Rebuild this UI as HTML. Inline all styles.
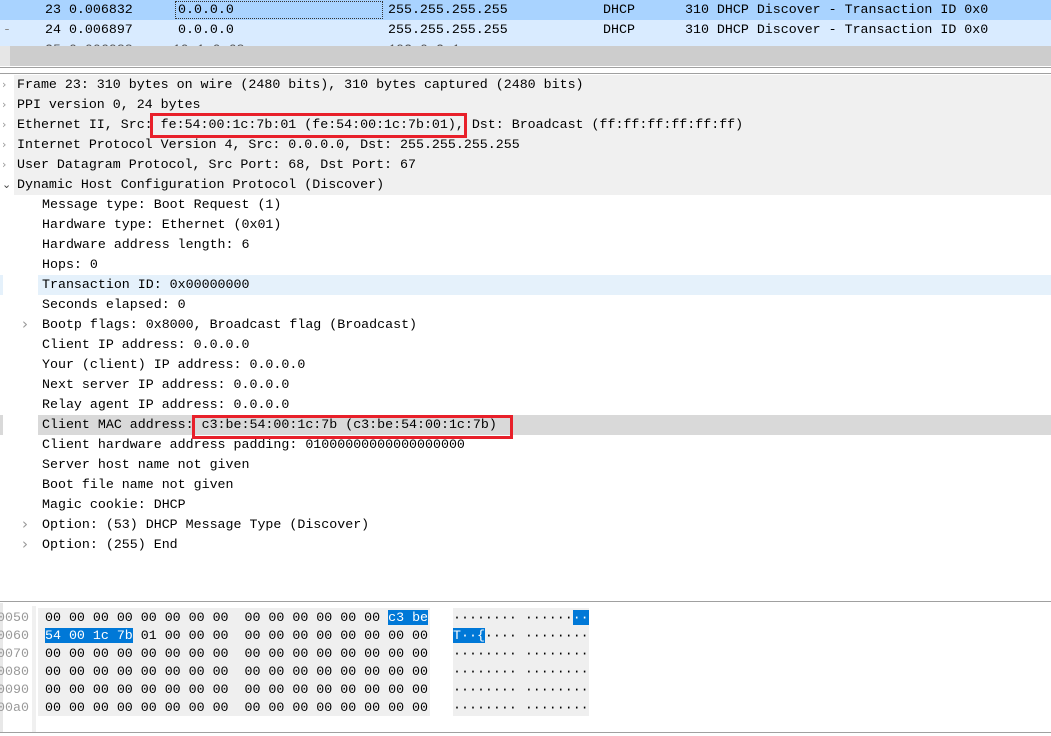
<!DOCTYPE html>
<html><head><style>
body{margin:0;width:1051px;height:736px;overflow:hidden;background:#fff;position:relative;font-family:"Liberation Mono",monospace;font-size:13.3px;color:#000}
.a{position:absolute;white-space:pre;line-height:20px;height:20px;top:0}
.r{position:absolute;left:0;width:1051px;height:20px}
.box{position:absolute;border:3px solid #e8202a;box-sizing:border-box}
.arr{position:absolute;color:#999;font-family:"DejaVu Sans",sans-serif;font-size:11px;line-height:20px}
.h{position:absolute;white-space:pre;line-height:18px}
.sel{background:#0078d7;color:#fff}
</style></head><body>
<div class="r" style="top:0;background:#a9d3ff"></div>
<div class="r" style="top:20px;background:#d9ebff"></div>
<div class="r" style="top:40px;height:6px;background:#d9ebff;overflow:hidden"><div class="a" style="left:45px;top:0;color:#555">25 0.006988     10.1.0.68                  192.0.2.1</div></div>
<div style="position:absolute;left:175px;top:1px;width:208px;height:18px;border:1px dotted #333;box-sizing:border-box"></div>
<div class="a" style="left:45px;top:0">23 0.006832</div>
<div class="a" style="left:178px;top:0">0.0.0.0</div>
<div class="a" style="left:388px;top:0">255.255.255.255</div>
<div class="a" style="left:603px;top:0">DHCP</div>
<div class="a" style="left:685px;top:0">310 DHCP Discover - Transaction ID 0x0</div>
<div class="a" style="left:45px;top:20px">24 0.006897</div>
<div class="a" style="left:178px;top:20px">0.0.0.0</div>
<div class="a" style="left:388px;top:20px">255.255.255.255</div>
<div class="a" style="left:603px;top:20px">DHCP</div>
<div class="a" style="left:685px;top:20px">310 DHCP Discover - Transaction ID 0x0</div>
<div class="a" style="left:3px;top:20px;color:#888">-</div>
<div style="position:absolute;left:0;top:46px;width:10px;height:20px;background:#e6e6e6"></div>
<div style="position:absolute;left:10px;top:46px;width:1041px;height:20px;background:#cdcdcd"></div>
<div style="position:absolute;left:0;top:67px;width:1051px;height:1px;background:#a0a0a0"></div>
<div style="position:absolute;left:0;top:73px;width:1051px;height:1px;background:#a0a0a0"></div>
<div style="position:absolute;left:14px;top:75px;width:1037px;height:120px;background:#f0f0f0"></div>
<div style="position:absolute;left:38px;top:275px;width:1013px;height:20px;background:#e5f1fb"></div>
<div style="position:absolute;left:0;top:275px;width:3px;height:20px;background:#e5f1fb"></div>
<div style="position:absolute;left:38px;top:415px;width:1013px;height:20px;background:#d9d9d9"></div>
<div style="position:absolute;left:0;top:415px;width:3px;height:20px;background:#d9d9d9"></div>
<div class="a" style="left:17px;top:75px">Frame 23: 310 bytes on wire (2480 bits), 310 bytes captured (2480 bits)</div>
<div class="a" style="left:17px;top:95px">PPI version 0, 24 bytes</div>
<div class="a" style="left:17px;top:115px">Ethernet II, Src: fe:54:00:1c:7b:01 (fe:54:00:1c:7b:01), Dst: Broadcast (ff:ff:ff:ff:ff:ff)</div>
<div class="a" style="left:17px;top:135px">Internet Protocol Version 4, Src: 0.0.0.0, Dst: 255.255.255.255</div>
<div class="a" style="left:17px;top:155px">User Datagram Protocol, Src Port: 68, Dst Port: 67</div>
<div class="a" style="left:17px;top:175px">Dynamic Host Configuration Protocol (Discover)</div>
<div class="arr" style="left:2px;top:75px">›</div><div class="arr" style="left:2px;top:95px">›</div><div class="arr" style="left:2px;top:115px">›</div><div class="arr" style="left:2px;top:135px">›</div><div class="arr" style="left:2px;top:155px">›</div><div class="arr" style="left:2px;top:175px;color:#444">⌄</div>
<div class="a" style="left:42px;top:195px">Message type: Boot Request (1)</div>
<div class="a" style="left:42px;top:215px">Hardware type: Ethernet (0x01)</div>
<div class="a" style="left:42px;top:235px">Hardware address length: 6</div>
<div class="a" style="left:42px;top:255px">Hops: 0</div>
<div class="a" style="left:42px;top:275px">Transaction ID: 0x00000000</div>
<div class="a" style="left:42px;top:295px">Seconds elapsed: 0</div>
<div class="a" style="left:42px;top:315px">Bootp flags: 0x8000, Broadcast flag (Broadcast)</div>
<div class="a" style="left:42px;top:335px">Client IP address: 0.0.0.0</div>
<div class="a" style="left:42px;top:355px">Your (client) IP address: 0.0.0.0</div>
<div class="a" style="left:42px;top:375px">Next server IP address: 0.0.0.0</div>
<div class="a" style="left:42px;top:395px">Relay agent IP address: 0.0.0.0</div>
<div class="a" style="left:42px;top:415px">Client MAC address: c3:be:54:00:1c:7b (c3:be:54:00:1c:7b)</div>
<div class="a" style="left:42px;top:435px">Client hardware address padding: 01000000000000000000</div>
<div class="a" style="left:42px;top:455px">Server host name not given</div>
<div class="a" style="left:42px;top:475px">Boot file name not given</div>
<div class="a" style="left:42px;top:495px">Magic cookie: DHCP</div>
<div class="a" style="left:42px;top:515px">Option: (53) DHCP Message Type (Discover)</div>
<div class="a" style="left:42px;top:535px">Option: (255) End</div>
<div class="arr" style="left:22px;top:314px;font-size:15px">›</div>
<div class="arr" style="left:22px;top:514px;font-size:15px">›</div>
<div class="arr" style="left:22px;top:534px;font-size:15px">›</div>
<div class="box" style="left:150px;top:113px;width:317px;height:25px"></div>
<div class="box" style="left:192px;top:415px;width:321px;height:24px"></div>
<div style="position:absolute;left:0;top:601px;width:1051px;height:1px;background:#a0a0a0"></div>
<div style="position:absolute;left:0;top:603px;width:3px;height:130px;background:#e8e8e8"></div>
<div style="position:absolute;left:32px;top:606px;width:4px;height:126px;background:#f0f0f0"></div>
<div style="position:absolute;left:38px;top:608px;width:392px;height:108px;background:#efefef"></div>
<div style="position:absolute;left:453px;top:608px;width:136px;height:108px;background:#efefef"></div>
<div style="position:absolute;left:0;top:732px;width:1051px;height:1px;background:#a0a0a0"></div>
<div class="h" style="left:-3px;top:609px;color:#999">0050<br>0060<br>0070<br>0080<br>0090<br>00a0</div>
<div class="h" style="left:45px;top:609px">00 00 00 00 00 00 00 00  00 00 00 00 00 00 <span class="sel">c3 be</span></div>
<div class="h" style="left:45px;top:627px"><span class="sel">54 00 1c 7b</span> 01 00 00 00  00 00 00 00 00 00 00 00</div>
<div class="h" style="left:45px;top:645px">00 00 00 00 00 00 00 00  00 00 00 00 00 00 00 00</div>
<div class="h" style="left:45px;top:663px">00 00 00 00 00 00 00 00  00 00 00 00 00 00 00 00</div>
<div class="h" style="left:45px;top:681px">00 00 00 00 00 00 00 00  00 00 00 00 00 00 00 00</div>
<div class="h" style="left:45px;top:699px">00 00 00 00 00 00 00 00  00 00 00 00 00 00 00 00</div>
<div class="h" style="left:453px;top:609px">········ ······<span class="sel">··</span></div>
<div class="h" style="left:453px;top:627px"><span class="sel">T··{</span>···· ········</div>
<div class="h" style="left:453px;top:645px">········ ········</div>
<div class="h" style="left:453px;top:663px">········ ········</div>
<div class="h" style="left:453px;top:681px">········ ········</div>
<div class="h" style="left:453px;top:699px">········ ········</div>
</body></html>
